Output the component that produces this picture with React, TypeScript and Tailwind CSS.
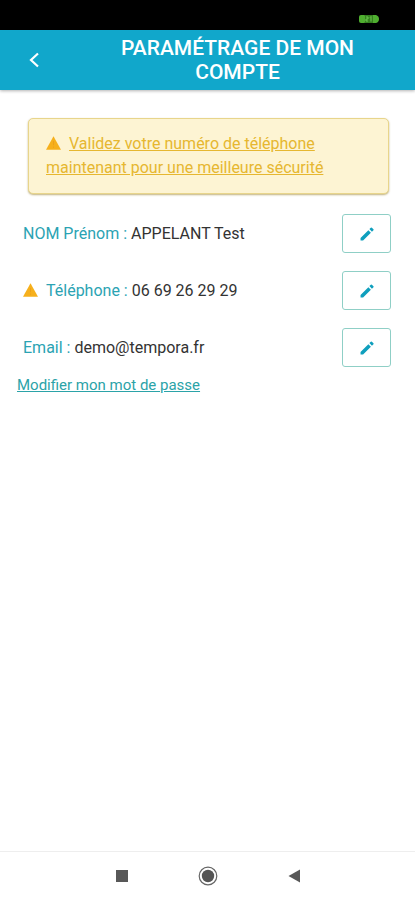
import type { ReactNode } from 'react';

interface AccountField {
  id: string;
  label: string;
  value: string;
  needsValidation?: boolean;
}

const fields: AccountField[] = [
  { id: 'name', label: 'NOM Prénom', value: 'APPELANT Test' },
  { id: 'phone', label: 'Téléphone', value: '06 69 26 29 29', needsValidation: true },
  { id: 'email', label: 'Email', value: 'demo@tempora.fr' },
];

function WarningIcon() {
  return (
    <svg viewBox="0 0 15 14" className="inline-block w-[15px] h-[14px] mr-2 align-[-1px]" aria-hidden="true">
      <path d="M7.5 0.3 L15 13.8 H0 Z" fill="#f6b01c" />
      <path d="M7 5 H8 V9.2 H7 Z M7 10.6 H8 V11.8 H7 Z" fill="#eda01a" />
    </svg>
  );
}

function PencilIcon() {
  return (
    <svg viewBox="0 0 24 24" className="w-[18px] h-[18px]" fill="#0f9fbd" aria-hidden="true">
      <path d="M3.4 17.4V20.8h3.4L17.2 10.4l-3.4-3.4L3.4 17.4zM20.6 7.1c.39-.39.39-1.02 0-1.41l-2.1-2.1a.996.996 0 0 0-1.41 0l-1.9 1.9 3.4 3.4 2.01-1.79z" />
    </svg>
  );
}

function StatusBar() {
  return (
    <div className="h-[30px] bg-black flex items-center justify-end pr-9 pt-2">
      <svg viewBox="0 0 20 8" className="w-5 h-2" aria-hidden="true">
        <rect x="0" y="0" width="7" height="8" rx="2" fill="#4fae30" />
        <rect x="6" y="0" width="8" height="8" fill="#35801f" />
        <path d="M14 0 H17 Q20 1 20 4 Q20 7 17 8 H14 Z" fill="#4fae30" />
        <path d="M7 2 H9 V4 H7 V6 H9 M11 2.5 L12 1.5 V6.5" fill="none" stroke="#6cc850" strokeWidth="1" />
      </svg>
    </div>
  );
}

function FieldRow({ field }: { field: AccountField }) {
  return (
    <div className="flex items-center justify-between">
      <p className="text-base leading-6">
        {field.needsValidation && <WarningIcon />}
        <span className="text-[#2ba3b3]">{field.label} : </span>
        <span className="text-[#333333]">{field.value}</span>
      </p>
      <button
        type="button"
        aria-label={`Modifier ${field.label}`}
        className="w-[49px] h-[39px] flex items-center justify-center rounded-[3px] border border-[#8fcfc6] bg-white"
      >
        <PencilIcon />
      </button>
    </div>
  );
}

function NavButton({ label, children }: { label: string; children: ReactNode }) {
  return (
    <button type="button" aria-label={label} className="w-[86px] h-full flex items-center justify-center">
      {children}
    </button>
  );
}

export default function App() {
  return (
    <div className="min-h-screen flex flex-col bg-white font-['Roboto',sans-serif]">
      <StatusBar />

      <header className="h-[60px] flex items-center bg-[#11a7cb] shadow-[0_1px_3px_rgba(0,0,0,0.3)]">
        <button type="button" aria-label="Retour" className="w-[60px] h-full flex items-center justify-center pl-2">
          <svg viewBox="0 0 12 16" className="w-3 h-4" fill="none" stroke="white" strokeWidth="2.2" aria-hidden="true">
            <path d="M10 1.5 L3 8 L10 14.5" />
          </svg>
        </button>
        <h1 className="flex-1 px-12 text-center text-[21px] leading-6 font-medium text-white">
          PARAMÉTRAGE DE MON COMPTE
        </h1>
      </header>

      <main className="flex-1">
        {/* Phone validation notice */}
        <div className="mt-7 ml-7 mr-[26px] px-[17px] pt-[13px] pb-[13px] rounded-[5px] border border-[#e8d58b] bg-[#fdf4d3] shadow-[0_1px_2px_rgba(150,125,40,0.6)] text-base leading-6">
          <WarningIcon />
          <a href="#phone" className="text-[#e6b730] underline">
            Validez votre numéro de téléphone maintenant pour une meilleure sécurité
          </a>
        </div>

        <section className="mt-5 pl-[23px] pr-6 flex flex-col gap-[18px]">
          {fields.map((field) => (
            <FieldRow key={field.id} field={field} />
          ))}
        </section>

        <a href="#password" className="inline-block mt-2 ml-[17px] text-[15px] leading-5 text-[#2ba3a8] underline">
          Modifier mon mot de passe
        </a>
      </main>

      {/* System navigation */}
      <nav className="h-[49px] flex justify-center border-t border-[#eeeeee] bg-white">
        <NavButton label="Applications récentes">
          <svg viewBox="0 0 12 12" className="w-3 h-3" aria-hidden="true">
            <rect width="12" height="12" fill="#585858" />
          </svg>
        </NavButton>
        <NavButton label="Accueil">
          <svg viewBox="0 0 20 20" className="w-5 h-5" aria-hidden="true">
            <circle cx="10" cy="10" r="8.8" fill="none" stroke="#666666" strokeWidth="1.2" />
            <circle cx="10" cy="10" r="6.2" fill="#555555" />
          </svg>
        </NavButton>
        <NavButton label="Précédent">
          <svg viewBox="0 0 12 14" className="w-3 h-[14px]" aria-hidden="true">
            <path d="M12 0.5 V13.5 L0.5 7 Z" fill="#585858" />
          </svg>
        </NavButton>
      </nav>
    </div>
  );
}
